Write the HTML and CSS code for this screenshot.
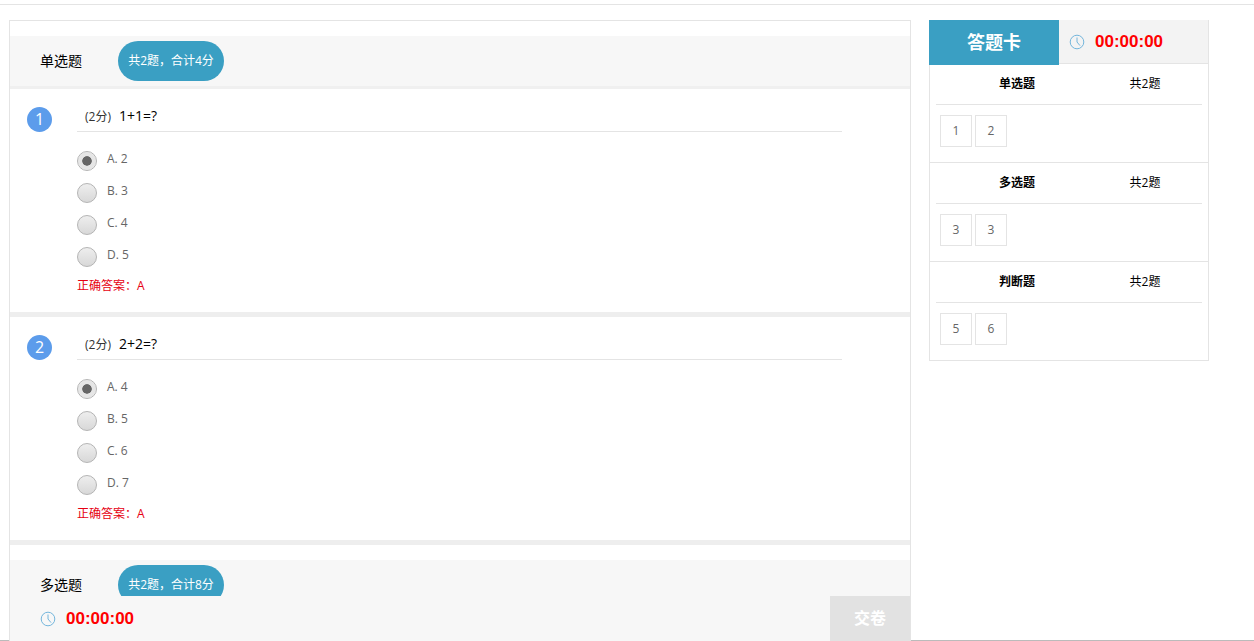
FILE: index.html
```html
<!DOCTYPE html>
<html lang="en">
  <head>
    <meta charset="UTF-8" />
    <title>答题卡</title>
    <link rel="stylesheet" href="styles.css">
  </head>

  <body>
    <div class="page">
      <!-- Question list -->
      <div class="paper">
        <div class="section-head">
          <span class="section-name">单选题</span>
          <span class="section-count">共2题，合计4分</span>
        </div>

        <div class="question">
          <div class="question-no">1</div>
          <div class="question-main">
            <div class="question-title"><span class="score">(2分)</span>1+1=?</div>
            <div class="option"><span class="radio checked"></span>A. 2</div>
            <div class="option"><span class="radio"></span>B. 3</div>
            <div class="option"><span class="radio"></span>C. 4</div>
            <div class="option"><span class="radio"></span>D. 5</div>
            <div class="answer">正确答案：A</div>
          </div>
        </div>

        <div class="question">
          <div class="question-no">2</div>
          <div class="question-main">
            <div class="question-title"><span class="score">(2分)</span>2+2=?</div>
            <div class="option"><span class="radio checked"></span>A. 4</div>
            <div class="option"><span class="radio"></span>B. 5</div>
            <div class="option"><span class="radio"></span>C. 6</div>
            <div class="option"><span class="radio"></span>D. 7</div>
            <div class="answer">正确答案：A</div>
          </div>
        </div>

        <div class="section-head">
          <span class="section-name">多选题</span>
          <span class="section-count">共2题，合计8分</span>
        </div>

        <div class="paper-foot">
          <svg class="clock" viewBox="0 0 16 16"><circle cx="8" cy="8" r="6.8"/><path d="M8 3.5V8l3 3.6"/></svg>
          <span class="time">00:00:00</span>
          <span class="submit">交卷</span>
        </div>
      </div>

      <!-- Answer card -->
      <div class="card">
        <div class="card-head">
          <div class="card-tab">答题卡</div>
          <div class="card-timer">
            <svg class="clock" viewBox="0 0 16 16"><circle cx="8" cy="8" r="6.8"/><path d="M8 3.5V8l3 3.6"/></svg>
            <span class="time">00:00:00</span>
          </div>
        </div>

        <div class="card-group">
          <div class="group-title"><b>单选题</b><span>共2题</span></div>
          <div class="group-nums"><span class="num">1</span><span class="num">2</span></div>
        </div>
        <div class="card-group">
          <div class="group-title"><b>多选题</b><span>共2题</span></div>
          <div class="group-nums"><span class="num">3</span><span class="num">3</span></div>
        </div>
        <div class="card-group">
          <div class="group-title"><b>判断题</b><span>共2题</span></div>
          <div class="group-nums"><span class="num">5</span><span class="num">6</span></div>
        </div>
      </div>
    </div>
  </body>
</html>
```

FILE: styles.css
```css
* {
  box-sizing: border-box;
}

html,
body {
  height: 100%;
  margin: 0;
  overflow: hidden;
}

body {
  font-family: "Open Sans", "Noto Sans CJK SC", sans-serif;
  color: #000;
  background: #fff;
}

/* --- Page --- */

.page {
  height: 641px;
  margin-top: 4px;
  padding: 15px 0 0 9px;
  border-top: 1px solid #e4e4e4;
  border-bottom: 1px solid #bbb;
  height: 637px;
  display: flex;
  align-items: flex-start;
  gap: 18px;
}

/* --- Paper --- */

.paper {
  position: relative;
  width: 902px;
  height: 621px;
  overflow: hidden;
  padding-top: 15px;
  border: 1px solid #e4e4e4;
  border-bottom: 0;
}

.section-head {
  height: 53px;
  padding: 5px 0 0 30px;
  display: flex;
  align-items: flex-start;
  background: #f7f7f7;
  border-bottom: 3px solid #f0f0f0;
}

.question + .section-head {
  margin-top: 15px;
}

.section-name {
  width: 78px;
  font-size: 14px;
  line-height: 40px;
}

.section-count {
  width: 106px;
  height: 40px;
  border-radius: 20px;
  background: #3a9fc3;
  color: #fff;
  font-size: 12px;
  line-height: 40px;
  text-align: center;
  white-space: nowrap;
}

/* --- Question --- */

.question {
  height: 228px;
  padding: 18px 0 0 17px;
  display: flex;
  border-bottom: 5px solid #eee;
}

.question-no {
  width: 25px;
  height: 25px;
  border-radius: 50%;
  background: #5c9ceb;
  color: #fff;
  font-size: 16px;
  line-height: 25px;
  text-align: center;
}

.question-main {
  width: 765px;
  margin-left: 25px;
}

.question-title {
  height: 25px;
  padding-left: 8px;
  border-bottom: 1px solid #e4e4e4;
  font-size: 14px;
  line-height: 18px;
}

.score {
  margin-right: 8px;
  font-size: 12px;
  color: #333;
}

.option {
  height: 32px;
  display: flex;
  font-size: 12px;
  line-height: 16px;
  color: #666;
}

.question-title + .option {
  margin-top: 19px;
}

.radio {
  width: 20px;
  height: 20px;
  margin-right: 10px;
  border-radius: 50%;
  border: 1px solid #b4b4b4;
  background: linear-gradient(#eee, #d8d8d8);
  position: relative;
  top: 0;
}

.radio.checked {
  background: #666;
  background-clip: content-box;
  padding: 4px;
  box-shadow: inset 0 0 0 4px #e6e6e6;
}

.answer {
  margin-top: -1px;
  font-size: 12px;
  line-height: 16px;
  color: #e60012;
}

/* --- Footer bar --- */

.paper-foot {
  position: absolute;
  left: 0;
  right: 0;
  bottom: 0;
  height: 45px;
  padding-left: 30px;
  display: flex;
  align-items: center;
  background: #f7f7f7;
}

.clock {
  width: 16px;
  height: 16px;
  fill: none;
  stroke: #74b6dc;
  stroke-width: 1;
}

.time {
  margin-left: 10px;
  font-family: "Liberation Sans", sans-serif;
  font-size: 17px;
  font-weight: bold;
  color: #f00;
}

.submit {
  margin-left: auto;
  width: 80px;
  height: 45px;
  background: #e2e2e2;
  color: #fff;
  font-size: 16px;
  font-weight: bold;
  line-height: 45px;
  text-align: center;
}

/* --- Answer card --- */

.card {
  width: 280px;
  border: 1px solid #e4e4e4;
}

.card-head {
  height: 44px;
  margin: -1px 0 0 -1px;
  display: flex;
  background: #f3f3f3;
  border-bottom: 1px solid #e4e4e4;
}

.card-tab {
  width: 130px;
  height: 45px;
  background: #3a9fc3;
  color: #fff;
  font-size: 18px;
  font-weight: bold;
  line-height: 45px;
  text-align: center;
}

.card-timer {
  padding-left: 10px;
  display: flex;
  align-items: center;
}

.card-group {
  height: 99px;
  padding: 0 6px;
  border-bottom: 1px solid #e4e4e4;
}

.card-group:last-child {
  height: 98px;
  border-bottom: 0;
}

.group-title {
  height: 41px;
  display: grid;
  grid-template-columns: 162px 94px;
  border-bottom: 1px solid #e4e4e4;
  font-size: 12px;
  line-height: 40px;
  text-align: center;
}

.group-nums {
  padding: 10px 4px 0;
  display: flex;
  gap: 3px;
}

.num {
  width: 32px;
  height: 32px;
  border: 1px solid #e4e4e4;
  color: #666;
  font-size: 12px;
  line-height: 30px;
  text-align: center;
}
```
